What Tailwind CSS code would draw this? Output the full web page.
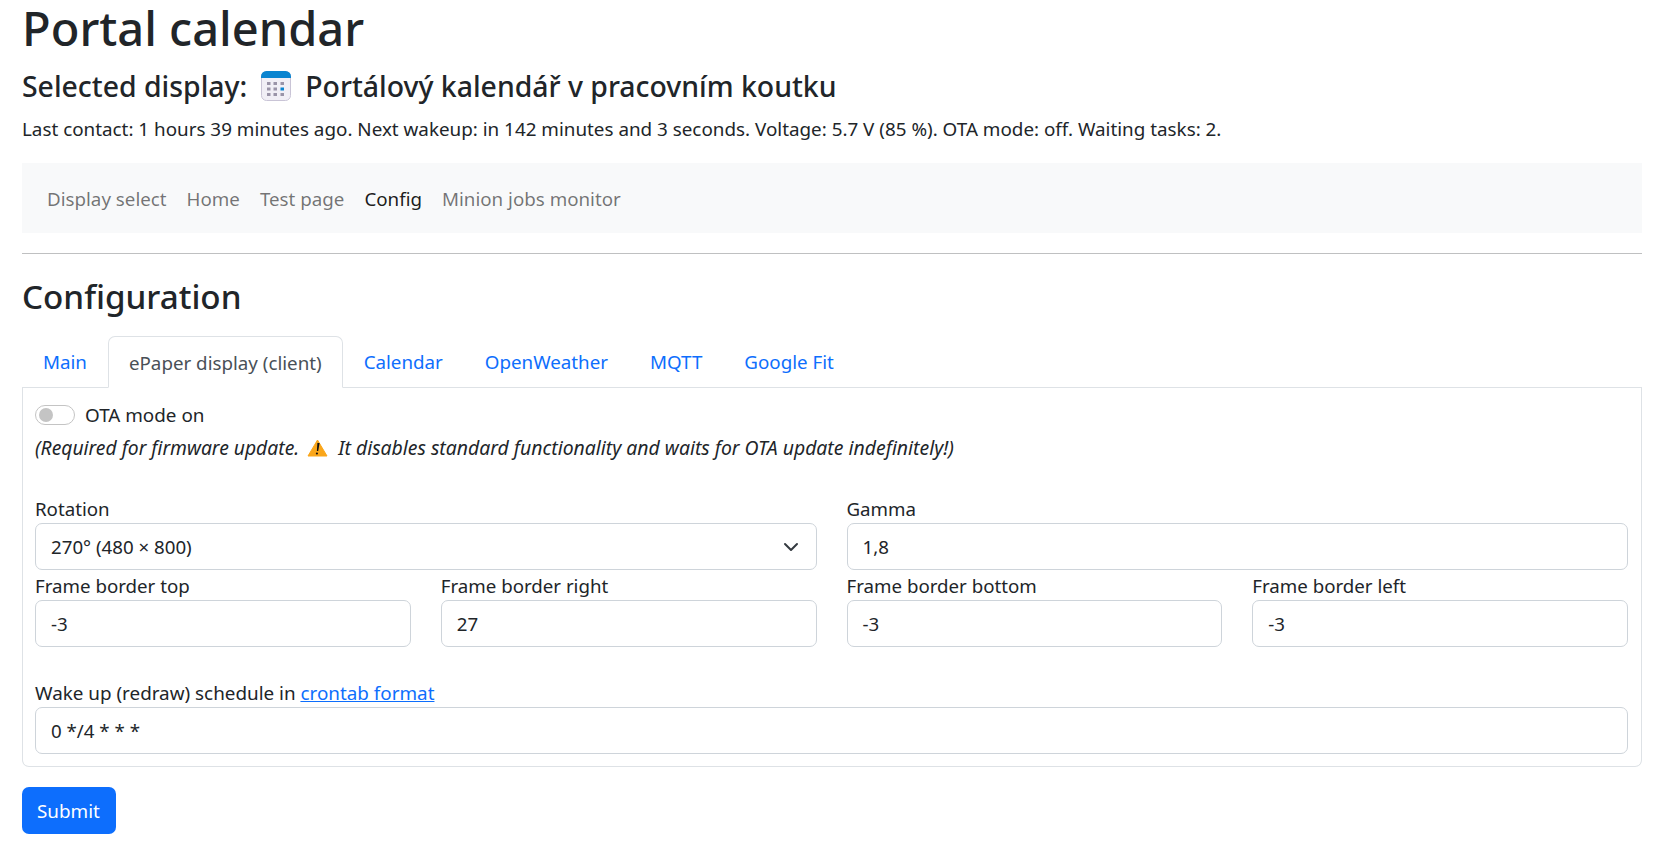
<!DOCTYPE html>
<html lang="en">
<head>
  <meta charset="UTF-8">
  <title>Portal calendar</title>
  <script src="https://cdn.jsdelivr.net/npm/@tailwindcss/browser@4"></script>
</head>
<body class="bg-white text-[#212529] font-['Noto_Sans',sans-serif] text-[18.7px] leading-[30px] overflow-hidden h-[848px]">
  <div class="pl-[22px] pr-[24px]">
    <h1 class="text-[47px] leading-[56px] font-medium">Portal calendar</h1>
    <h4 class="text-[28.4px] leading-[36px] font-medium mt-[12px] flex items-center">
      <span>Selected display:</span>
      <svg class="ml-[14px] mr-[14px]" width="30" height="30" viewBox="0 0 30 30">
        <rect x="0.5" y="0.5" width="29" height="29" rx="5" fill="#f1eff6" stroke="#c9c4d6"/>
        <path d="M0 7V5.5A5.5 5.5 0 0 1 5.5 0h19A5.5 5.5 0 0 1 30 5.5V7z" fill="#0a84d0"/>
        <g fill="#9a94a8">
          <rect x="6" y="11" width="3.5" height="3"/><rect x="12.5" y="11" width="3.5" height="3"/><rect x="19.5" y="11" width="3.5" height="3"/>
          <rect x="6" y="16.5" width="3.5" height="3"/><rect x="12.5" y="16.5" width="3.5" height="3"/>
          <rect x="6" y="22" width="3.5" height="3"/><rect x="12.5" y="22" width="3.5" height="3"/><rect x="19.5" y="22" width="3.5" height="3"/>
        </g>
        <rect x="19.5" y="16.5" width="3.5" height="3" fill="#0a84d0"/>
      </svg>
      <span>Portálový kalendář v pracovním koutku</span>
    </h4>
    <p class="mt-[10px] text-[18.84px]">Last contact: 1 hours 39 minutes ago. Next wakeup: in 142 minutes and 3 seconds. Voltage: 5.7 V (85 %). OTA mode: off. Waiting tasks: 2.</p>

    <nav class="mt-[19px] bg-[#f8f9fa] h-[70px] px-[25px] pt-[1px] flex items-center gap-[20px] text-[18.75px] text-black/55">
      <a href="#">Display select</a>
      <a href="#">Home</a>
      <a href="#">Test page</a>
      <a href="#" class="text-black/90">Config</a>
      <a href="#">Minion jobs monitor</a>
    </nav>
    <hr class="mt-[20px] border-t border-[#bfc0c1]">

    <h3 class="text-[33.2px] leading-[42px] font-medium mt-[22px]">Configuration</h3>

    <ul class="mt-[18px] flex border-b border-[#dee2e6] h-[52px] text-[18.75px]">
      <li class="px-[21px] pt-[11px] text-[#0d6efd]">Main</li>
      <li class="px-[20px] pt-[11px] text-[#495057] bg-white border border-[#dee2e6] border-b-white rounded-t-[7px] h-[52px]">ePaper display (client)</li>
      <li class="px-[21px] pt-[11px] text-[#0d6efd]">Calendar</li>
      <li class="px-[21px] pt-[11px] text-[#0d6efd]">OpenWeather</li>
      <li class="px-[21px] pt-[11px] text-[#0d6efd]">MQTT</li>
      <li class="px-[21px] pt-[11px] text-[#0d6efd]">Google Fit</li>
    </ul>

    <div class="border border-[#dee2e6] border-t-0 rounded-b-[7px] pl-[12px] pr-[13px] pt-[12px] pb-[12px] h-[379px]">
      <div class="flex items-center gap-[10px] h-[30px]">
        <span class="w-[40px] h-[20px] rounded-full border border-[#c4c4c4] flex items-center pl-[3px]">
          <span class="w-[14px] h-[14px] rounded-full bg-[#c4c4c4]"></span>
        </span>
        <label class="text-[18.85px]">OTA mode on</label>
      </div>
      <p class="italic mt-[3px] flex items-center">
        <span class="text-[19.3px]">(Required for firmware update.</span>
        <svg class="ml-[8px] mr-[10px]" width="21" height="18" viewBox="0 0 21 18">
          <path d="M10.5 1 20 17H1z" fill="#faa61a" stroke="#faa61a" stroke-linejoin="round"/>
          <path d="M12.6 4 11.2 12H9.9l.5-8z" fill="#111"/><circle cx="9.9" cy="14.5" r="1.1" fill="#111"/>
        </svg>
        <span class="text-[19.4px]">It disables standard functionality and waits for OTA update indefinitely!)</span>
      </p>

      <div class="grid grid-cols-4 gap-x-[30px] mt-[30px]">
        <div class="col-span-2">
          <label class="block h-[30px] pt-[1px]">Rotation</label>
          <div class="h-[47px] border border-[#ced4da] rounded-[7px] pl-[15px] pr-[17px] flex items-center justify-between">
            <span>270° (480 × 800)</span>
            <svg width="16" height="16" viewBox="0 0 16 16"><path d="m2 5 6 6 6-6" fill="none" stroke="#343a40" stroke-width="2" stroke-linecap="round" stroke-linejoin="round"/></svg>
          </div>
        </div>
        <div class="col-span-2">
          <label class="block h-[30px] pt-[1px]">Gamma</label>
          <div class="h-[47px] border border-[#ced4da] rounded-[7px] px-[15px] flex items-center">1,8</div>
        </div>
        <div>
          <label class="block h-[30px] pt-[1px]">Frame border top</label>
          <div class="h-[47px] border border-[#ced4da] rounded-[7px] px-[15px] flex items-center">-3</div>
        </div>
        <div>
          <label class="block h-[30px] pt-[1px]">Frame border right</label>
          <div class="h-[47px] border border-[#ced4da] rounded-[7px] px-[15px] flex items-center">27</div>
        </div>
        <div>
          <label class="block h-[30px] pt-[1px]">Frame border bottom</label>
          <div class="h-[47px] border border-[#ced4da] rounded-[7px] px-[15px] flex items-center">-3</div>
        </div>
        <div>
          <label class="block h-[30px] pt-[1px]">Frame border left</label>
          <div class="h-[47px] border border-[#ced4da] rounded-[7px] px-[15px] flex items-center">-3</div>
        </div>
      </div>

      <div class="mt-[30px]">
        <label class="block h-[30px] pt-[1px] text-[18.85px]">Wake up (redraw) schedule in <a href="#" class="text-[#0d6efd] underline">crontab format</a></label>
        <div class="h-[47px] border border-[#ced4da] rounded-[7px] px-[15px] flex items-center">0 */4 * * *</div>
      </div>
    </div>

    <button class="mt-[20px] h-[47px] pl-[15px] pr-[16px] pt-[1px] bg-[#0d6efd] text-white rounded-[7px] text-[18.85px]">Submit</button>
  </div>
</body>
</html>
